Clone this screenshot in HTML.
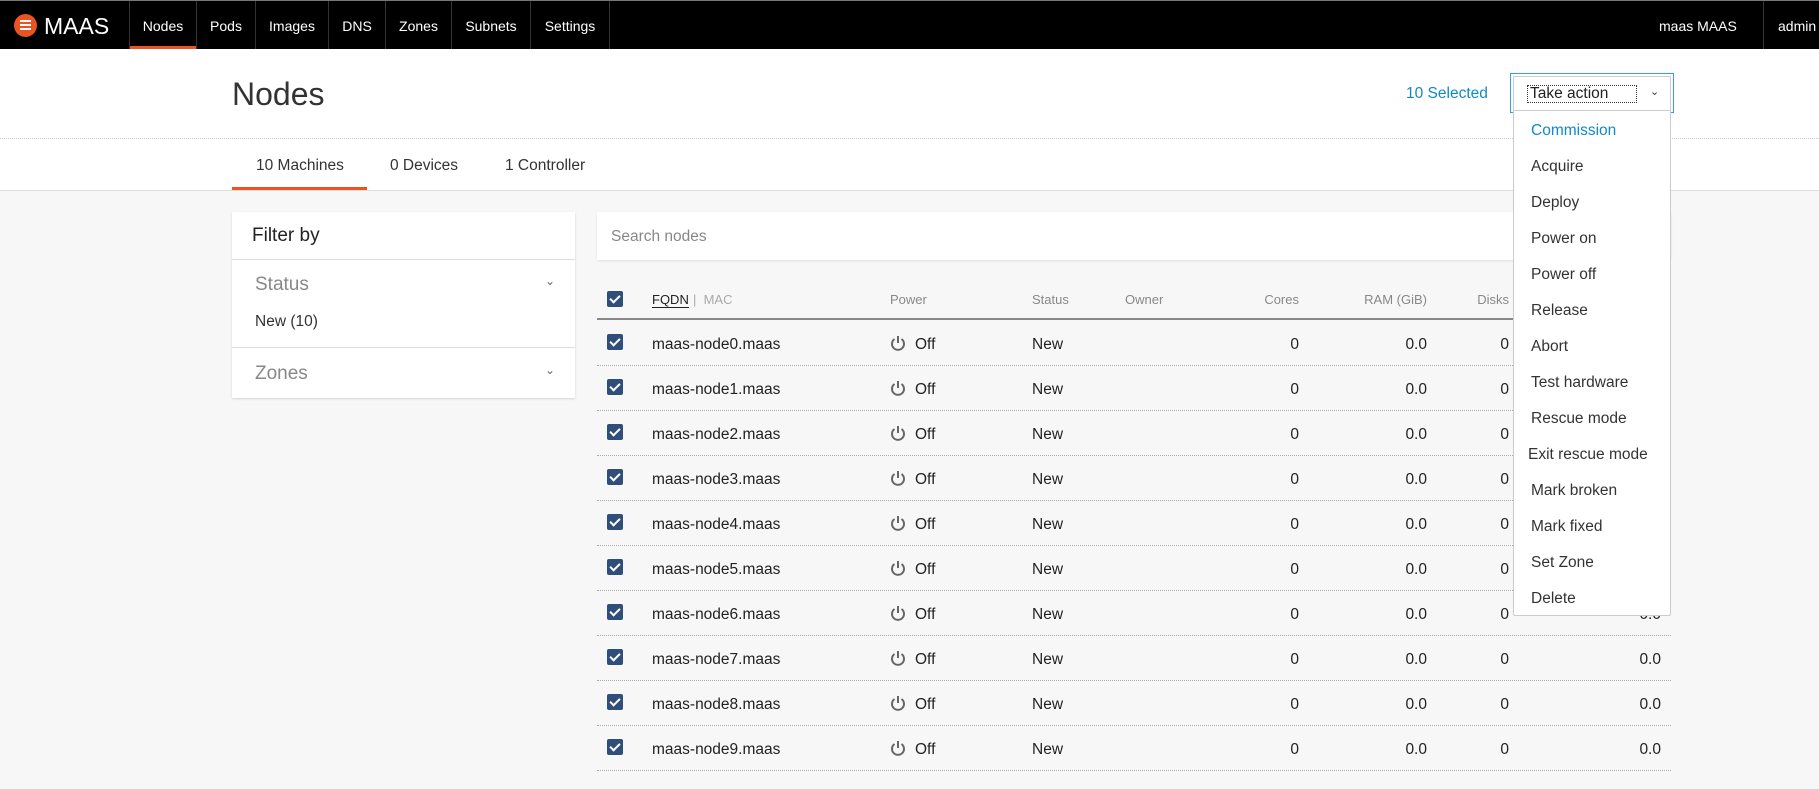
<!DOCTYPE html>
<html><head><meta charset="utf-8"><style>
*{box-sizing:border-box;margin:0;padding:0}
body{width:1819px;height:789px;overflow:hidden;background:#f7f7f7;font-family:"Liberation Sans",sans-serif;color:#111;position:relative}
.a{position:absolute;white-space:nowrap}
.nav{position:absolute;left:0;top:0;width:1819px;height:49px;background:#000;border-top:1px solid #777}
.ni{position:absolute;top:0;height:48px;line-height:50px;color:#fff;font-size:14px;text-align:center;border-right:1px solid #333}
.hdr{position:absolute;left:0;top:49px;width:1819px;height:142px;background:#fff;border-bottom:1px solid #ddd}
.row{position:absolute;left:597px;width:1074px;height:45px;border-bottom:1px dotted #aaa}
.cb{position:absolute;width:16px;height:16px;background:#2f4f7a;border-radius:2px;left:10px}
.cb:after{content:"";position:absolute;left:5px;top:2px;width:4px;height:8px;border:solid #fff;border-width:0 2px 2px 0;transform:rotate(45deg)}
.c{position:absolute;font-size:15.5px;top:15px;color:#222}
.r{text-align:right}
.dd div{height:36px;line-height:36px;padding-left:17px;font-size:15.5px;color:#333}
</style></head><body>
<div class="nav">
 <div class="a" style="left:14px;top:13px;width:23px;height:23px;border-radius:50%;background:#e95420"></div>
 <div class="a" style="left:20px;top:19px;width:11px;height:2px;background:#fff;box-shadow:0 4px 0 #fff,0 8px 0 #fff"></div>
 <div class="a" style="left:44px;top:12px;color:#fff;font-size:23px">MAAS</div>
 <div class="ni" style="left:129px;width:68px;border-left:1px solid #333">Nodes<div style="position:absolute;left:0;right:0;bottom:0;height:3px;background:#e95420"></div></div>
 <div class="ni" style="left:197px;width:59px">Pods</div>
 <div class="ni" style="left:256px;width:73px">Images</div>
 <div class="ni" style="left:329px;width:57px">DNS</div>
 <div class="ni" style="left:386px;width:66px">Zones</div>
 <div class="ni" style="left:452px;width:79px">Subnets</div>
 <div class="ni" style="left:531px;width:79px">Settings</div>
 <div class="a" style="left:1659px;top:17px;color:#fff;font-size:14px">maas MAAS</div>
 <div class="a" style="left:1763px;top:0;height:48px;border-left:1px solid #333"></div>
 <div class="a" style="left:1778px;top:17px;color:#fff;font-size:14px">admin</div>
</div>
<div class="hdr">
 <div class="a" style="left:232px;top:27px;font-size:32px;color:#333">Nodes</div>
 <div class="a" style="left:0;top:89px;width:1819px;border-top:1px dotted #ccc"></div>
 <div class="a" style="left:256px;top:108px;font-size:15.5px;color:#333">10 Machines</div>
 <div class="a" style="left:232px;top:138px;width:135px;height:3px;background:#e95420"></div>
 <div class="a" style="left:390px;top:108px;font-size:15.5px;color:#333">0 Devices</div>
 <div class="a" style="left:505px;top:108px;font-size:15.5px;color:#333">1 Controller</div>
 <div class="a" style="left:1406px;top:36px;font-size:15.5px;color:#0e8ac8">10 Selected</div>
 <div class="a" style="left:1510px;top:24px;width:164px;height:40px;border:1px solid #2ea6d9"></div>
 <div class="a" style="left:1513px;top:27px;width:158px;height:35px;border:1px solid #ccc;background:#fff"></div>
 <div class="a" style="left:1527px;top:36px;width:110px;height:18px;border:1px dotted #333"></div>
 <div class="a" style="left:1530px;top:36px;font-size:15.5px;color:#222">Take action</div>
 <div class="a" style="left:1650px;top:36px;font-size:11px;color:#333">&#8964;</div>
</div>
<div class="a" style="left:232px;top:212px;width:343px;height:186px;background:#fff;box-shadow:0 1px 2px rgba(0,0,0,.15)">
 <div class="a" style="left:20px;top:13px;font-size:19px;color:#222">Filter by</div>
 <div class="a" style="left:0;top:47px;width:343px;border-top:1px solid #ddd"></div>
 <div class="a" style="left:23px;top:62px;font-size:19px;color:#888">Status</div>
 <div class="a" style="left:313px;top:62px;font-size:12px;color:#666">&#8964;</div>
 <div class="a" style="left:23px;top:101px;font-size:15.5px;color:#333">New (10)</div>
 <div class="a" style="left:0;top:135px;width:343px;border-top:1px solid #ddd"></div>
 <div class="a" style="left:23px;top:151px;font-size:19px;color:#888">Zones</div>
 <div class="a" style="left:313px;top:151px;font-size:12px;color:#666">&#8964;</div>
</div>
<div class="a" style="left:597px;top:212px;width:1074px;height:48px;background:#fff;box-shadow:0 1px 2px rgba(0,0,0,.1)">
 <div class="a" style="left:14px;top:16px;font-size:15.5px;color:#888">Search nodes</div>
</div>
<div class="a" style="left:597px;top:277px;width:1074px;height:43px;border-bottom:2px solid #888;font-size:13px;color:#888">
 <div class="cb" style="top:14px"></div>
 <div class="a" style="left:55px;top:15px;color:#222;border-bottom:1px solid #222">FQDN</div>
 <div class="a" style="left:96px;top:15px;color:#aaa">|&nbsp; MAC</div>
 <div class="a" style="left:293px;top:15px">Power</div>
 <div class="a" style="left:435px;top:15px">Status</div>
 <div class="a" style="left:528px;top:15px">Owner</div>
 <div class="a r" style="left:600px;width:102px;top:15px">Cores</div>
 <div class="a r" style="left:730px;width:100px;top:15px">RAM (GiB)</div>
 <div class="a r" style="left:830px;width:82px;top:15px">Disks</div>
</div>
<div id="rows"></div>
<script>
var h="";for(var i=0;i<10;i++){var t=321+i*45;h+='<div class="row" style="top:'+t+'px"><div class="cb" style="top:13px"></div><div class="c" style="left:55px">maas-node'+i+'.maas</div><svg class="a" style="left:292px;top:13px" width="18" height="18" viewBox="0 0 18 18"><path d="M5.5 5A6 6 0 1 0 12.5 5" fill="none" stroke="#666" stroke-width="2"/><path d="M9 2v7" stroke="#666" stroke-width="2"/></svg><div class="c" style="left:318px">Off</div><div class="c" style="left:435px">New</div><div class="c r" style="left:600px;width:102px">0</div><div class="c r" style="left:730px;width:100px">0.0</div><div class="c r" style="left:830px;width:82px">0</div><div class="c r" style="left:960px;width:104px">0.0</div></div>';}
document.getElementById("rows").innerHTML=h;
</script>
<div class="a dd" style="left:1513px;top:111px;width:158px;height:505px;background:#fff;border:1px solid #ccc;border-top:none;border-radius:0 0 2px 2px;padding-top:2px">
 <div style="color:#0e8ac8">Commission</div><div>Acquire</div><div>Deploy</div><div>Power on</div><div>Power off</div><div>Release</div><div>Abort</div><div>Test hardware</div><div>Rescue mode</div><div style="padding-left:14px">Exit rescue mode</div><div>Mark broken</div><div>Mark fixed</div><div>Set Zone</div><div>Delete</div>
</div>
</body></html>
